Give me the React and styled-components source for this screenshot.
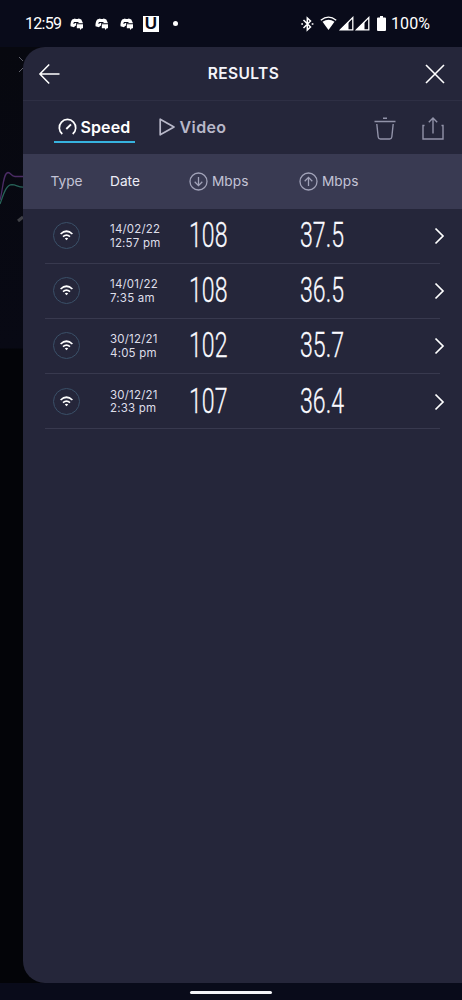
import React from 'react';
import styled, { createGlobalStyle } from 'styled-components';

const GlobalStyle = createGlobalStyle`
  * {
    box-sizing: border-box;
  }
  body {
    margin: 0;
    background: #090b1a;
    font-family: Inter, 'Liberation Sans', sans-serif;
  }
  svg {
    display: block;
    flex: none;
    overflow: visible;
  }
`;

const Screen = styled.div`
  display: flex;
  flex-direction: column;
  width: 462px;
  height: 1000px;
  overflow: hidden;
  background: #090b1a;
`;

const StatusBar = styled.div`
  display: flex;
  align-items: center;
  height: 47px;
  padding: 0 32px 0 25px;
  color: #fff;
`;

const StatusText = styled.span`
  font-family: Roboto, sans-serif;
  font-size: 16px;
  line-height: 20px;
  width: ${props => props.$width}px;
  letter-spacing: ${props => props.$spacing || 0}px;
  white-space: nowrap;
`;

const Notifications = styled.div`
  display: flex;
  align-items: center;
  gap: 11px;
  margin-left: 9px;
`;

const UBadge = styled.span`
  width: 16px;
  height: 16px;
  background: #fff;
  color: #090b1a;
  font: bold 17px/16px 'Liberation Sans', sans-serif;
  text-align: center;
  margin-left: -2px;
`;

const Dot = styled.span`
  width: 5px;
  height: 5px;
  border-radius: 50%;
  background: #fff;
  margin-left: 3px;
`;

const SystemIcons = styled.div`
  display: flex;
  align-items: center;
  gap: ${props => props.$gap || 0}px;
  margin-left: ${props => (props.$nested ? '6px' : 'auto')};
  margin-right: ${props => (props.$nested ? '7px' : '0')};
`;

const Stage = styled.div`
  display: flex;
  height: 936px;
  background: linear-gradient(#07080f 0, #080914 301px, #030408 302px);
`;

const Behind = styled.div`
  width: 22.5px;
  overflow: hidden;
`;

const Panel = styled.main`
  flex: 1;
  background: #25263a;
  border-radius: 22px 0 0 22px;
  overflow: hidden;
`;

const Header = styled.header`
  display: flex;
  align-items: center;
  justify-content: space-between;
  height: 54px;
  padding: 0 18px 0 16.5px;
  border-bottom: 1px solid #2e2f44;
`;

const Title = styled.h1`
  margin: 0 0 0 1px;
  color: #f5f5fa;
  font-size: 15.5px;
  font-weight: 600;
  letter-spacing: 0.4px;
`;

const Tabs = styled.nav`
  display: flex;
  height: 53px;
  padding: 0 18px 0 31px;
`;

const Tab = styled.button`
  display: flex;
  align-items: center;
  gap: 4px;
  width: ${props => props.$width}px;
  height: 42px;
  margin: 0 20px 0 0;
  padding: 12px 4px 0;
  border: 0;
  border-bottom: 2px solid ${props => (props.$active ? '#37b3df' : 'transparent')};
  background: none;
  color: ${props => (props.$active ? '#fff' : '#b8b8c9')};
  font-family: inherit;
  font-size: 16px;
  font-weight: 600;
  letter-spacing: ${props => props.$spacing || 0}px;
`;

const Tools = styled.div`
  display: flex;
  gap: 26px;
  margin: 16px 0 0 auto;
`;

const TableHead = styled.div`
  display: grid;
  grid-template-columns: 59.5px 79px 110px 1fr;
  align-items: center;
  height: 54.5px;
  padding-left: 28px;
  background: #393a52;
  color: #c3c3d6;
  font-size: 13.7px;
`;

const HeadCell = styled.div`
  display: flex;
  align-items: center;
  gap: 4px;
  color: ${props => (props.$active ? '#ededf6' : 'inherit')};
`;

const Unit = styled.span`
  font-size: 13.7px;
`;

const Row = styled.div`
  display: grid;
  grid-template-columns: 65px 79px 110.5px 1fr 9px;
  align-items: center;
  height: 55.2px;
  margin: 0 22px 0 22.5px;
  border-bottom: 1.5px solid #38394e;
`;

const WifiCircle = styled.div`
  display: flex;
  align-items: center;
  justify-content: center;
  width: 27px;
  height: 27px;
  margin-left: 8px;
  border: 1px solid #3a5068;
  border-radius: 50%;
`;

const When = styled.div`
  color: #dedee9;
  font-size: 11.5px;
  letter-spacing: 0.2px;
  line-height: 13.5px;
  margin-top: 2px;
  white-space: nowrap;
`;

const Value = styled.span`
  margin-top: 1px;
  color: #fafaff;
  font-family: Roboto, sans-serif;
  font-size: 35px;
  font-weight: 300;
  line-height: 40px;
  white-space: nowrap;
  transform: scaleX(0.66);
  transform-origin: left center;
  -webkit-text-stroke: 0.3px #fafaff;
`;

const ChevronBox = styled.div`
  margin: 1px 0 0 4px;
`;

const NavBar = styled.div`
  display: flex;
  justify-content: center;
  height: 17px;
  padding-top: 8px;
`;

const NavHandle = styled.div`
  width: 82px;
  height: 3px;
  border-radius: 2px;
  background: #f3f3f7;
`;

const results = [
  { date: '14/02/22', time: '12:57 pm', down: '108', up: '37.5' },
  { date: '14/01/22', time: '7:35 am', down: '108', up: '36.5' },
  { date: '30/12/21', time: '4:05 pm', down: '102', up: '35.7' },
  { date: '30/12/21', time: '2:33 pm', down: '107', up: '36.4' }
];

const ChatIcon = () => (
  <svg width="14" height="12" viewBox="0 0 14 12">
    <path fill="#fff" d="M2.2 1.6 5 .5l.7.5h2L8.8.5l2.500 1L13 5.200H6v2.600h-.7L4 9.200.5 8.300C.3 5.500 1 3.200 2.200 1.600Z" />
    <path fill="#fff" d="M6.800 6.300H13v3.900h-1.200L10.400 12l-.6-1.800h-3Z" />
    <path d="M4 6V4.500h4.500" fill="none" stroke="#090b1a" />
  </svg>
);

const BluetoothIcon = () => (
  <svg width="13" height="16" viewBox="0 0 13 16" fill="none" stroke="#fff" strokeWidth="1.5">
    <path d="m2.5 4 7 7-3.200 3.100V1.900l3.200 3.100-7 7" />
    <path d="M.3 8h1.700M10.700 8h1.700" />
  </svg>
);

const StatusWifi = () => (
  <svg width="17" height="15" viewBox="0 0 17 15">
    <path fill="none" stroke="#fff" strokeWidth="1.3" d="M.8 4.300Q8.500-2.200 16.200 4.300" />
    <path fill="#fff" d="M2.500 5.800Q8.500 1.500 14.500 5.800L8.500 14Z" />
  </svg>
);

const SignalIcon = () => (
  <svg width="15" height="15" viewBox="0 0 15 15">
    <path fill="none" stroke="#fff" strokeWidth="1.3" d="M1.500 13.800 13.800 1.500v12.300Z" />
    <path fill="#fff" d="M1 14 9.500 5.500V14Z" />
  </svg>
);

const BatteryIcon = () => (
  <svg width="9" height="15" viewBox="0 0 9 15">
    <path fill="#fff" d="M3 0h3v1.500h2q1 0 1 1V14q0 1-1 1H1q-1 0-1-1V2.500q0-1 1-1h2Z" />
  </svg>
);

const BackIcon = () => (
  <svg width="21" height="20" viewBox="0 0 21 20" fill="none" stroke="#fff" strokeWidth="1.5">
    <path d="M10.200.5.900 10l9.300 9.500M.9 10h19.600" />
  </svg>
);

const CloseIcon = () => (
  <svg width="18" height="18" viewBox="0 0 18 18" stroke="#fff" strokeWidth="1.6">
    <path d="m0 0 18 18M18 0 0 18" />
  </svg>
);

const GaugeIcon = () => (
  <svg width="19" height="19" viewBox="0 0 19 19" fill="none" stroke="#fff" strokeWidth="1.7">
    <path d="M4.300 16A8.200 8.200 0 1 1 14.700 16" />
    <path d="m8.300 11 4.700-4.700" strokeWidth="1.9" />
  </svg>
);

const PlayIcon = () => (
  <svg width="17" height="18" viewBox="0 0 17 18" fill="none" stroke="#b8b8c9" strokeWidth="1.7">
    <path strokeLinejoin="round" d="M1.200 1.200v15.600L15 9Z" />
  </svg>
);

const TrashIcon = () => (
  <svg width="22" height="23" viewBox="0 0 22 23" fill="none" stroke="#9293a9" strokeWidth="1.4">
    <path d="M.5 4.500h21M9 1.200h4M2.800 7l1.400 13q.3 2 2.200 2h9.200q1.900 0 2.200-2l1.400-13" />
  </svg>
);

const ShareIcon = () => (
  <svg width="22" height="23" viewBox="0 0 22 23" fill="none" stroke="#9293a9" strokeWidth="1.4">
    <path d="M2.500 8.500H1V22h20V8.500h-1.500M11 16.500V1M6.800 5.200 11 1l4.200 4.200" />
  </svg>
);

const ArrowCircle = ({ up }) => (
  <svg width="19" height="19" viewBox="0 0 19 19" fill="none" stroke="#a1a2b8" strokeWidth="1.3">
    <circle cx="9.5" cy="9.5" r="8.5" />
    <path d={up ? 'M9.500 14V5.500M5.700 9.200l3.800-3.800 3.800 3.800' : 'M9.500 5v8.500M5.700 9.800l3.800 3.800 3.800-3.800'} />
  </svg>
);

const WifiIcon = () => (
  <svg width="13" height="11" viewBox="0 0 13 11" fill="none" stroke="#fff" strokeWidth="1.7">
    <path d="M.6 4Q6.500-1.500 12.400 4M3 6.700Q6.500 3.500 10 6.700" />
    <path d="m6.500 10.300-1.700-1.900q1.700-1.200 3.400 0Z" fill="#fff" stroke="none" />
  </svg>
);

const ChevronIcon = () => (
  <svg width="9" height="16" viewBox="0 0 9 16" fill="none" stroke="#fff" strokeWidth="1.7">
    <path d="m.5.500 7.500 7.500-7.500 7.500" />
  </svg>
);

const BackdropArt = () => (
  <svg width="23" height="302" viewBox="0 47 23 302" fill="none">
    <path d="m19 57 4 4M19 72l4-4" stroke="#62636d" />
    <path d="M0 200C3 190 3 173 8 172.500c3 0 3 4 7 4h8" stroke="#4b2c65" strokeWidth="1.3" />
    <path d="M0 204C4 193 6 185 12 184.700c4 0 6 2.300 11 2.500" stroke="#276359" strokeWidth="1.3" />
    <path d="m18 221 5-4" stroke="#3f4046" strokeWidth="3" />
  </svg>
);

class App extends React.Component {
  state = { tab: 'speed' };

  selectTab = tab => {
    this.setState({ tab });
  };

  render() {
    const { tab } = this.state;
    return (
      <Screen>
        <GlobalStyle />
        <StatusBar>
          <StatusText $width={36} $spacing={-0.7}>12:59</StatusText>
          <Notifications>
            <ChatIcon />
            <ChatIcon />
            <ChatIcon />
            <UBadge>U</UBadge>
            <Dot />
          </Notifications>
          <SystemIcons>
            <BluetoothIcon />
            <SystemIcons $nested $gap={1.5}>
              <StatusWifi />
              <SignalIcon />
              <SignalIcon />
            </SystemIcons>
            <SystemIcons $gap={5}>
              <BatteryIcon />
              <StatusText $width={39} $spacing={0.1}>100%</StatusText>
            </SystemIcons>
          </SystemIcons>
        </StatusBar>
        <Stage>
          <Behind>
            <BackdropArt />
          </Behind>
          <Panel>
            <Header>
              <BackIcon />
              <Title>RESULTS</Title>
              <CloseIcon />
            </Header>
            <Tabs>
              <Tab $width={81} $spacing={0.1} $active={tab === 'speed'} onClick={() => this.selectTab('speed')}>
                <GaugeIcon />
                Speed
              </Tab>
              <Tab $width={82} $spacing={0.4} $active={tab === 'video'} onClick={() => this.selectTab('video')}>
                <PlayIcon />
                Video
              </Tab>
              <Tools>
                <TrashIcon />
                <ShareIcon />
              </Tools>
            </Tabs>
            <TableHead>
              <HeadCell>Type</HeadCell>
              <HeadCell $active>Date</HeadCell>
              <HeadCell>
                <ArrowCircle />
                <Unit>Mbps</Unit>
              </HeadCell>
              <HeadCell>
                <ArrowCircle up />
                <Unit>Mbps</Unit>
              </HeadCell>
            </TableHead>
            {results.map(result => (
              <Row key={result.date + result.time}>
                <WifiCircle>
                  <WifiIcon />
                </WifiCircle>
                <When>
                  {result.date}
                  <br />
                  {result.time}
                </When>
                <Value>{result.down}</Value>
                <Value>{result.up}</Value>
                <ChevronBox>
                  <ChevronIcon />
                </ChevronBox>
              </Row>
            ))}
          </Panel>
        </Stage>
        <NavBar>
          <NavHandle />
        </NavBar>
      </Screen>
    );
  }
}

export default App;
